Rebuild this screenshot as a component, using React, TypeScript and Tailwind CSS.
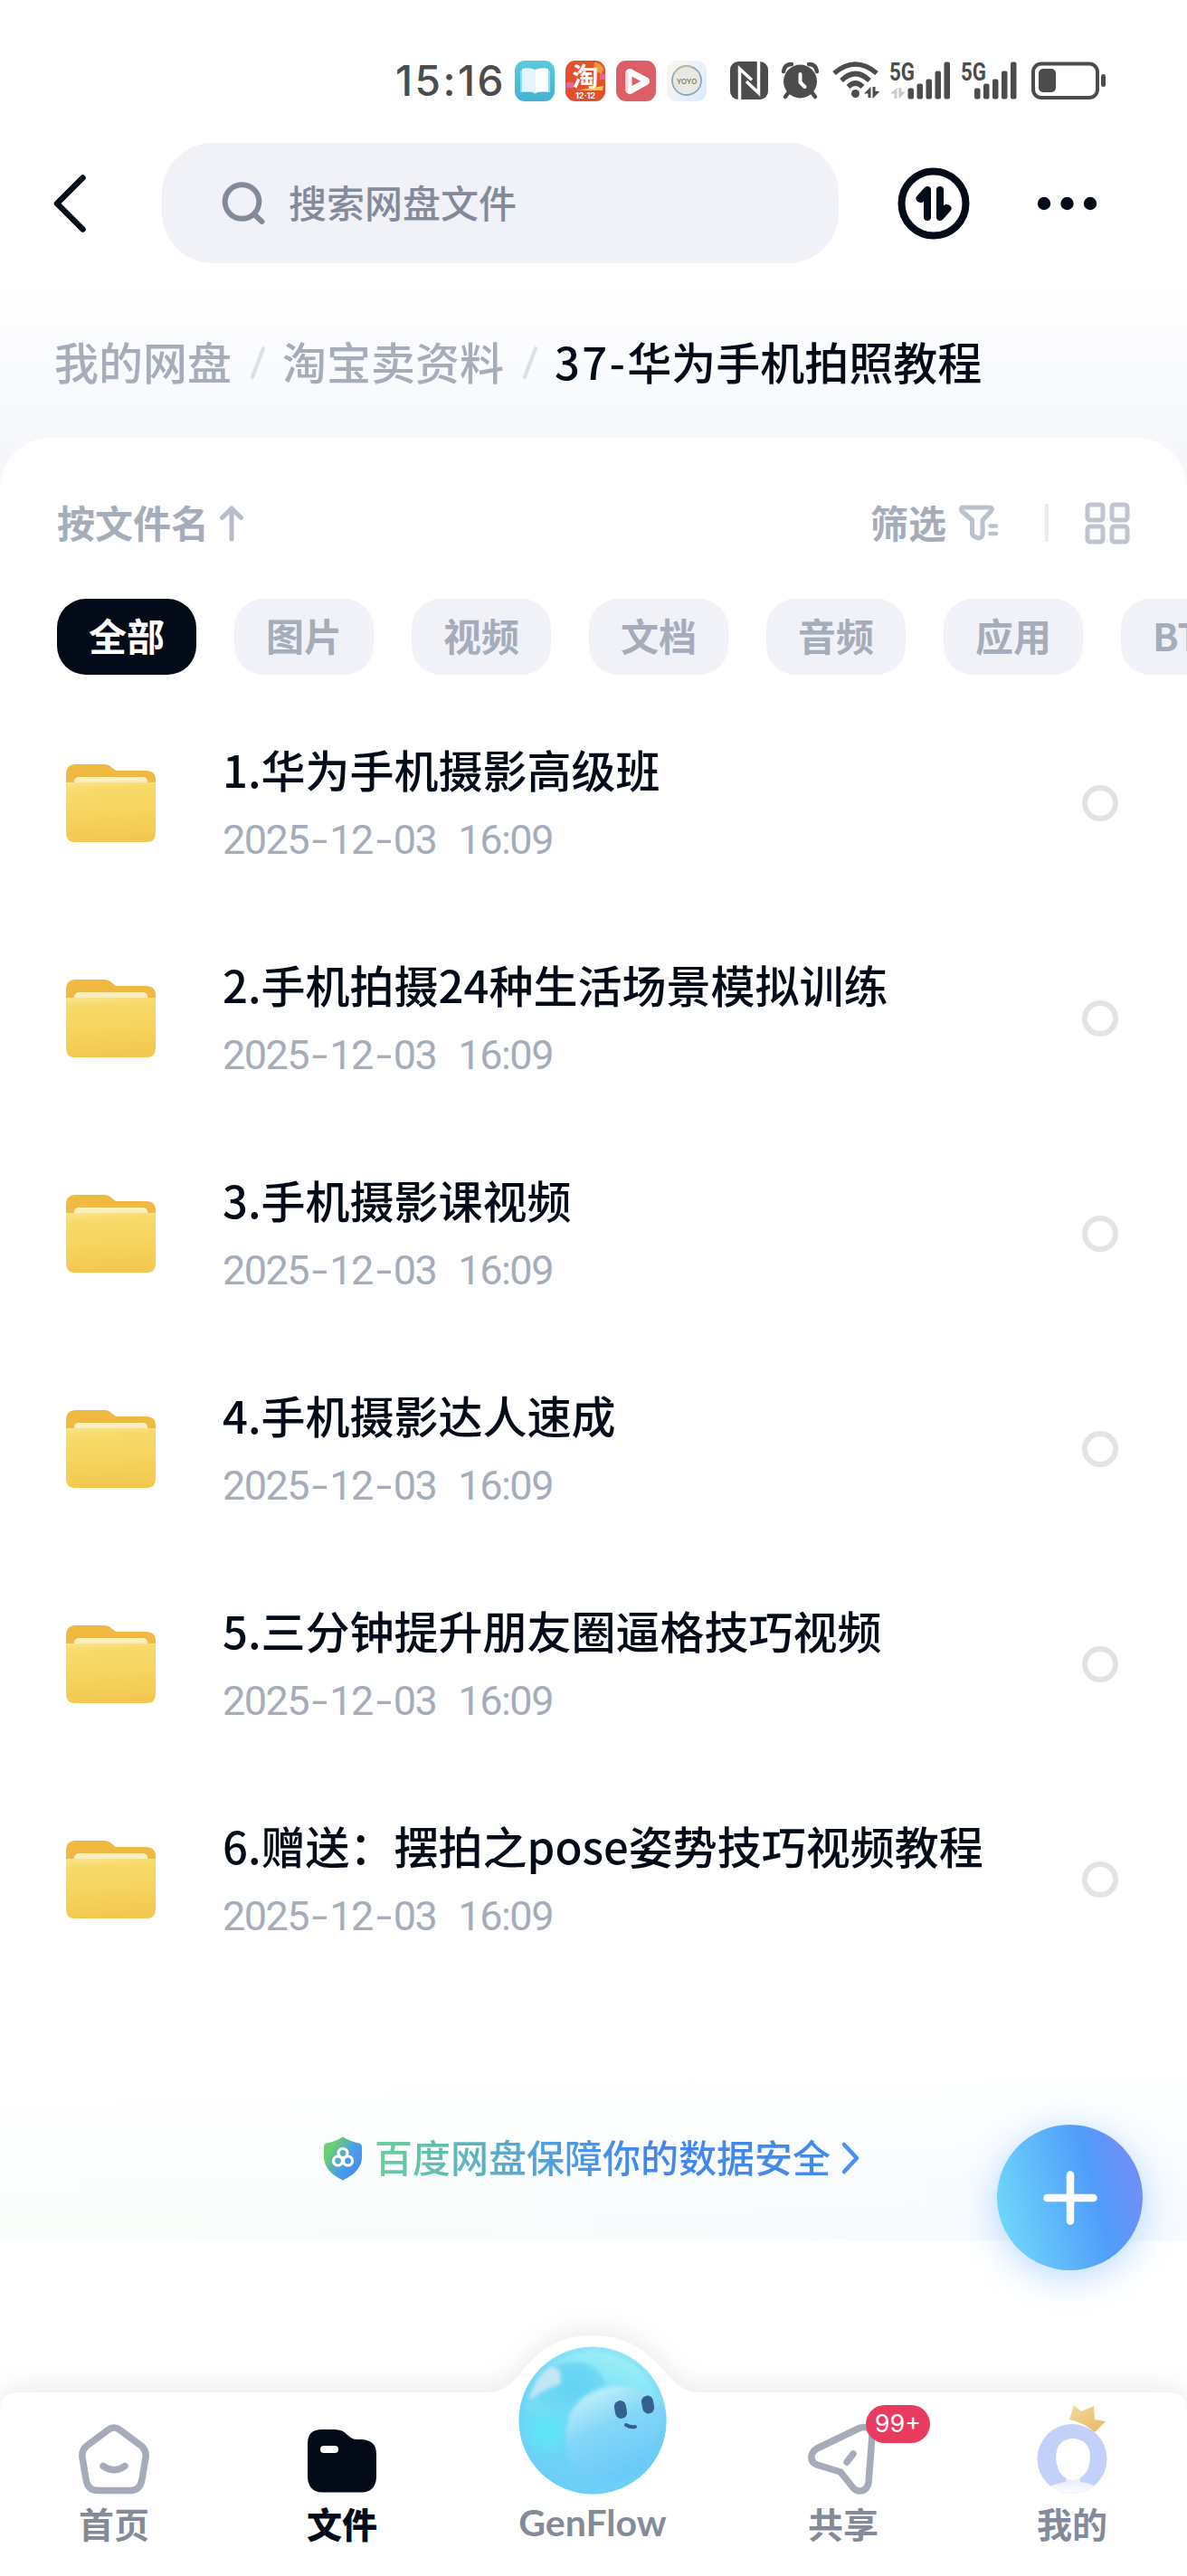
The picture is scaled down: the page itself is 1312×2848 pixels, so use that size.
import { ReactNode } from "react";
import { twMerge } from "tailwind-merge";

type FileItem = { name: string; date: string; time: string };

const files: FileItem[] = [
  { name: "1.华为手机摄影高级班", date: "2025-12-03", time: "16:09" },
  { name: "2.手机拍摄24种生活场景模拟训练", date: "2025-12-03", time: "16:09" },
  { name: "3.手机摄影课视频", date: "2025-12-03", time: "16:09" },
  { name: "4.手机摄影达人速成", date: "2025-12-03", time: "16:09" },
  { name: "5.三分钟提升朋友圈逼格技巧视频", date: "2025-12-03", time: "16:09" },
  {
    name: "6.赠送：摆拍之pose姿势技巧视频教程",
    date: "2025-12-03",
    time: "16:09",
  },
];

const categories = ["全部", "图片", "视频", "文档", "音频", "应用", "BT种子"];

export default function App() {
  return (
    <div className="relative flex h-[2848px] w-[1312px] flex-col overflow-hidden bg-[linear-gradient(to_bottom,#ffffff_310px,#f5f7fb_490px)] font-['Noto_Sans_CJK_SC',sans-serif] text-[#040b18]">
      <StatusBar />
      <Header />
      <Breadcrumb />
      <main className="flex flex-1 flex-col rounded-t-[56px] bg-white">
        <SortBar />
        <Categories />
        <ul className="mt-[23px]">
          {files.map((f) => (
            <FileRow key={f.name} file={f} />
          ))}
        </ul>
        <SafetyBanner />
        <BottomNav />
      </main>
      <AddButton />
    </div>
  );
}

const StatusBar = () => (
  <div className="flex h-[158px] items-start pt-[67px] pl-[437px] text-[#4c4c4c]">
    <div className="flex h-[45px] w-[132px] items-center font-['Inter',sans-serif] text-[46px] leading-[45px] font-medium tracking-[2.500px]">
      15:16
    </div>
    <div className="flex gap-[12px]">
      <BookApp />
      <TaobaoApp />
      <PlayerApp />
      <YoyoApp />
    </div>
    <svg
      className="-mt-[10px] ml-[26px]"
      width="415"
      height="60"
      viewBox="807 57 415 60"
    >
      <NfcGlyph />
      <AlarmGlyph />
      <WifiGlyph />
      <SignalGlyph x={983} barsX={1003.5} />
      <SignalGlyph x={1062} barsX={1077} />
      <path
        d="M984 103.500L991.500 97V109H988.500V103.500ZM993.500 97H996.500V101.500H1001L993.500 109Z"
        fill="#c9c9c9"
      />
      <rect
        x="1142"
        y="70.5"
        width="71"
        height="37.5"
        rx="9"
        fill="none"
        stroke="currentColor"
        strokeWidth="4"
      />
      <rect x="1148" y="76" width="19" height="26" rx="5" fill="currentColor" />
      <rect x="1217" y="82" width="5" height="14" rx="2.5" fill="currentColor" />
    </svg>
  </div>
);

const BookApp = () => (
  <svg width="44" height="45" viewBox="0 0 44 45">
    <defs>
      <linearGradient id="book" x1="0" y1="0" x2="0" y2="1">
        <stop offset="0" stopColor="#5bcbdc" />
        <stop offset="1" stopColor="#45b0d0" />
      </linearGradient>
    </defs>
    <rect width="44" height="45" rx="11" fill="url(#book)" />
    <path d="M6 11h33v24H25l-2.500 2-2.500-2H6z" fill="#8fdcea" />
    <path d="M8 9q8-2 14.500 1v26q-6-3-14.500-1.500z" fill="#e3f4fa" />
    <path d="M37 9q-8-2-14.500 1v26q6-3 14.500-1.500z" fill="#fff" />
  </svg>
);

const TaobaoApp = () => (
  <div className="relative flex h-[45px] w-11 flex-col items-center rounded-[11px] bg-[#e2502c] text-white">
    <svg className="absolute inset-0" width="44" height="45">
      <path d="M32 2q8 1 10 7l-2 6-9-5z" fill="#f39a3c" />
      <rect x="38" y="15" width="6" height="6" fill="#e9669d" />
      <rect x="1" y="24" width="8" height="6" fill="#e9669d" />
      <path d="M12 33l30-5-1 5z" fill="#f0c55a" />
    </svg>
    <span className="relative text-[29px] leading-[32px] font-bold">淘</span>
    <span className="relative font-['Inter',sans-serif] text-[9px] leading-[13px] font-bold">
      12·12
    </span>
  </div>
);

const PlayerApp = () => (
  <svg width="44" height="45" viewBox="0 0 44 45">
    <rect width="44" height="45" rx="11" fill="#dc5f67" />
    <path
      d="M15 13.500L32.500 22.800L15 32.500z"
      fill="#dc5f67"
      stroke="#fff"
      strokeWidth="9"
      strokeLinejoin="round"
    />
    <path d="M17.500 17.500L27 22.800L17.500 28z" fill="#dc5f67" />
    <path d="M12 13v20" stroke="#f6d9db" strokeWidth="3" strokeLinecap="round" />
  </svg>
);

const YoyoApp = () => (
  <div className="relative flex h-[45px] w-11 items-center justify-center rounded-[11px] bg-[linear-gradient(120deg,#faf6ee,#e9f1fc_60%,#dbe9fa)]">
    <svg className="absolute inset-0" width="44" height="45">
      <circle
        cx="22"
        cy="22"
        r="16"
        fill="#e9e9e4"
        stroke="#8fa9b8"
        strokeWidth="1.800"
      />
      <path
        d="M8 15a16 16 0 0 1 20-8"
        fill="none"
        stroke="#cdb98c"
        strokeWidth="1.500"
      />
    </svg>
    <span className="relative font-['Inter',sans-serif] text-[8px] font-semibold text-[#8d7c58]">
      YOYO
    </span>
  </div>
);

const NfcGlyph = () => (
  <>
    <rect x="807" y="68" width="42" height="42" rx="9" fill="currentColor" />
    <path
      d="M817.500 110V76L831 88.500M838.500 68V103L825 90"
      fill="none"
      stroke="#fff"
      strokeWidth="3.500"
    />
  </>
);

const AlarmGlyph = () => (
  <>
    <circle cx="884.500" cy="90" r="18.500" fill="currentColor" />
    <path
      d="M866 79Q867 71 875 71M903 79Q902 71 894 71M871 103L868 107M898 103L901 107"
      fill="none"
      stroke="currentColor"
      strokeWidth="4.500"
      strokeLinecap="round"
    />
    <path
      d="M884.500 82V91L889.500 96"
      fill="none"
      stroke="#fff"
      strokeWidth="4"
      strokeLinecap="round"
      strokeLinejoin="round"
    />
  </>
);

const WifiGlyph = () => (
  <>
    <g fill="none" stroke="currentColor" strokeWidth="5.500">
      <path d="M922 81Q945.500 61 969 81" />
      <path d="M930 89Q945.500 74 961 89" />
      <path d="M937.500 96Q945.500 88 953.500 96" />
    </g>
    <circle cx="945.500" cy="103.500" r="4.500" fill="currentColor" />
    <path
      d="M955 103.500L962.500 96V108H959.500V103.500ZM964.500 96H967.500V101H972.500L964.500 109Z"
      fill="currentColor"
    />
  </>
);

const SignalGlyph = ({ x, barsX }: { x: number; barsX: number }) => (
  <>
    <text
      x={x}
      y="88.500"
      fontFamily="Roboto, sans-serif"
      fontWeight="700"
      fontSize="27"
      textLength="28"
      lengthAdjust="spacingAndGlyphs"
      fill="currentColor"
    >
      5G
    </text>
    {[12, 17, 22, 31, 41].map((h, i) => (
      <rect
        key={h}
        x={barsX + i * 10}
        y={109.5 - h}
        width="6.5"
        height={h}
        rx="2"
        fill="currentColor"
      />
    ))}
  </>
);

const Header = () => (
  <header className="flex h-[133px] items-center pl-[56px]">
    <svg
      width="43"
      height="68"
      viewBox="0 0 43 68"
      fill="none"
      stroke="currentColor"
      strokeWidth="6.500"
      strokeLinecap="round"
      strokeLinejoin="round"
    >
      <path d="M35.500 5.500L7 34L35.500 62.500" />
    </svg>
    <div className="ml-[80px] flex h-full w-[748px] items-center rounded-[56px] bg-[#f1f2f8] pl-[66px] text-[#838b9a]">
      <svg
        width="49"
        height="49"
        viewBox="0 0 49 49"
        fill="none"
        stroke="currentColor"
        strokeWidth="6"
        strokeLinecap="round"
      >
        <circle cx="22.500" cy="23" r="18.800" />
        <path d="M37 38L44.500 45" />
      </svg>
      <span className="-mt-1 ml-[25px] text-[42px] leading-[60px] font-medium">
        搜索网盘文件
      </span>
    </div>
    <svg
      className="ml-[65px]"
      width="80"
      height="80"
      viewBox="0 0 80 80"
      fill="none"
      stroke="currentColor"
      strokeWidth="8"
      strokeLinecap="round"
      strokeLinejoin="round"
    >
      <circle cx="40" cy="40" r="35.500" />
      <path d="M33 55V25L24.500 34.500M33 29L26 35" />
      <path d="M47 25V55L55.500 45.500M47 51L54 45" />
    </svg>
    <svg className="ml-[74px]" width="68" height="16" fill="currentColor">
      <circle cx="8" cy="8" r="7.200" />
      <circle cx="33.500" cy="8" r="7.200" />
      <circle cx="59" cy="8" r="7.200" />
    </svg>
  </header>
);

const Slash = () => (
  <svg
    className="mr-[16px] ml-[18px]"
    width="22"
    height="46"
    viewBox="0 0 22 46"
    stroke="#dcdfe5"
    strokeWidth="4"
    strokeLinecap="round"
  >
    <path d="M5 39L17 7" />
  </svg>
);

const Breadcrumb = () => (
  <nav className="flex h-[193px] items-start pt-[78px] pl-[60px] text-[49px] leading-[60px] font-medium text-[#a5adbb]">
    <span>我的网盘</span>
    <span className="h-[60px] pt-[9px]">
      <Slash />
    </span>
    <span>淘宝卖资料</span>
    <span className="h-[60px] pt-[9px]">
      <Slash />
    </span>
    <span className="text-[#040b18]">
      <span className="tracking-[2.300px]">37-</span>华为手机拍照教程
    </span>
  </nav>
);

const SortBar = () => (
  <div className="mt-[71px] flex h-12 items-center pr-[63px] pl-[63px] text-[42px] leading-[48px] font-bold text-[#a5adbb]">
    <span className="-mt-1">按文件名</span>
    <svg
      className="ml-[11px]"
      width="28"
      height="42"
      viewBox="0 0 28 42"
      fill="none"
      stroke="#b6bcc9"
      strokeWidth="5"
      strokeLinecap="round"
      strokeLinejoin="round"
    >
      <path d="M14 38V4M3.500 14.500L14 4L24.500 14.500" />
    </svg>
    <span className="-mt-1 ml-auto">筛选</span>
    <svg
      className="-mt-[2px] ml-[13px]"
      width="46"
      height="42"
      viewBox="0 0 46 42"
      fill="none"
      stroke="#bbc1cd"
      strokeWidth="5"
      strokeLinecap="round"
      strokeLinejoin="round"
    >
      <path d="M6 4H34Q39 4 36.500 8L27 18V34Q26 38 22 38Q16 36 15.500 33V18L4 8Q2 4 6 4Z" />
      <path d="M35.500 24.500H42M35.500 33H42" strokeWidth="4.500" />
    </svg>
    <div className="-mt-[2px] ml-[50px] h-[42px] w-1 bg-[#ebecee]" />
    <svg
      className="-mt-[2px] ml-[40px]"
      width="50"
      height="47"
      viewBox="0 0 50 47"
      fill="none"
      stroke="#bfc4cf"
      strokeWidth="5"
    >
      <rect x="3" y="3" width="17" height="17" rx="3" />
      <rect x="30" y="3" width="17" height="17" rx="3" />
      <rect x="3" y="27" width="17" height="17" rx="3" />
      <rect x="30" y="27" width="17" height="17" rx="3" />
    </svg>
  </div>
);

const Categories = () => (
  <div className="mt-[59px] flex gap-[42px] overflow-hidden pl-[63px]">
    {categories.map((c, i) => (
      <div
        key={c}
        className={twMerge(
          "flex h-[84px] min-w-[154px] shrink-0 items-center justify-center rounded-[32px] bg-[#f1f2f8] px-[35px] pb-1 text-[42px] leading-[60px] font-bold text-[#a5adbb]",
          i === 0 && "bg-[#040b18] text-white"
        )}
      >
        {c}
      </div>
    ))}
  </div>
);

const FileRow = ({ file }: { file: FileItem }) => (
  <li className="flex h-[238px] items-center pr-[76px] pl-[73px]">
    <FolderIcon />
    <div className="ml-[74px] flex-1">
      <div className="-mt-1 text-[49px] leading-[60px] font-medium">
        {file.name}
      </div>
      <DateText date={file.date} time={file.time} />
    </div>
    <div className="size-[40px] rounded-full border-[6px] border-[#e3e3e3]" />
  </li>
);

const DateText = ({ date, time }: { date: string; time: string }) => (
  <div className="mt-[25px] flex font-['Roboto',sans-serif] text-[45px] leading-[48px] tracking-[-1.500px] text-[#a5adbb]">
    {date.split("-").map((part, i) => (
      <span key={i}>
        {i > 0 && (
          <span className="inline-block w-[23px] origin-center scale-x-[1.400] text-center">
            -
          </span>
        )}
        {part}
      </span>
    ))}
    <span className="ml-[24px]">{time}</span>
  </div>
);

const FolderIcon = () => (
  <svg width="99" height="88" viewBox="0 0 99 88">
    <defs>
      <linearGradient id="folder-front" x1="0" y1="0" x2="0.100" y2="1">
        <stop offset="0" stopColor="#fae58f" />
        <stop offset="0.150" stopColor="#f7da6a" />
        <stop offset="0.550" stopColor="#f6d45e" />
        <stop offset="1" stopColor="#f3c850" />
      </linearGradient>
      <linearGradient id="folder-paper" x1="0" y1="0" x2="0" y2="1">
        <stop offset="0" stopColor="#fdf3cf" />
        <stop offset="1" stopColor="#f9e594" />
      </linearGradient>
    </defs>
    <path
      d="M0 30V12Q0 1 11 1H42Q47 1 50 4L55 8H88Q99 8 99 18V30Z"
      fill="#f0b941"
    />
    <path d="M9 26V20Q9 15 15 15H84Q90 15 90 20V26Z" fill="url(#folder-paper)" />
    <path
      d="M0 21H99V77Q99 87 89 87H10Q0 87 0 77Z"
      fill="url(#folder-front)"
    />
  </svg>
);

const SafetyBanner = () => (
  <div className="mt-[83px] flex h-[197px] items-start bg-[linear-gradient(to_bottom,#ffffff,transparent),linear-gradient(to_right,#f9fefa,#f7fcfc_45%,#f5faff)] pt-[82px] pl-[357px]">
    <svg width="44" height="49" viewBox="0 0 44 49">
      <defs>
        <linearGradient id="shield" x1="0" y1="0.100" x2="1" y2="0.800">
          <stop offset="0.200" stopColor="#6bcf74" />
          <stop offset="0.600" stopColor="#4a9ee8" />
          <stop offset="1" stopColor="#4588f5" />
        </linearGradient>
      </defs>
      <path
        d="M22 0.500Q31 6 40 7.500Q43 8 43 12V24Q42 39 22 48.500Q2 39 1 24V12Q1 8 4 7.500Q13 6 22 0.500Z"
        fill="url(#shield)"
      />
      <g fill="none" stroke="#fff" strokeWidth="3.200">
        <circle cx="22" cy="18.500" r="5" />
        <circle cx="16.500" cy="27" r="5" />
        <circle cx="27.500" cy="27" r="5" />
      </g>
    </svg>
    <span className="-mt-[8px] ml-[13px] bg-[linear-gradient(to_right,#6bcf9b,#4f9ee0_40%,#4285f0_60%,#428ce8)] bg-clip-text text-[42px] leading-[60px] font-medium text-transparent">
      百度网盘保障你的数据安全
    </span>
    <svg
      className="mt-[5px] ml-[11px]"
      width="22"
      height="38"
      viewBox="0 0 22 38"
      fill="none"
      stroke="#4a90ee"
      strokeWidth="4.500"
      strokeLinejoin="round"
      strokeLinecap="round"
    >
      <path d="M4 4L18 19L4 34" />
    </svg>
  </div>
);

const AddButton = () => (
  <button className="absolute top-[2349px] left-[1102px] flex size-[161px] items-center justify-center rounded-full bg-[linear-gradient(75deg,#70d6fa_8%,#4f9dfa_65%,#6f8ff8_88%)] shadow-[0_8px_40px_rgba(80,160,255,0.4)]">
    <svg
      width="60"
      height="60"
      viewBox="0 0 60 60"
      stroke="#fff"
      strokeWidth="8.500"
      strokeLinecap="round"
    >
      <path d="M30 4.500V55.500M4.500 30H55.500" />
    </svg>
  </button>
);

const NavItem = ({
  label,
  active,
  className,
  children,
}: {
  label: string;
  active?: boolean;
  className?: string;
  children: ReactNode;
}) => (
  <div
    className={twMerge(
      "relative flex w-[160px] flex-col items-center justify-end text-[#838b9a]",
      active && "text-[#040b18]",
      className
    )}
  >
    {children}
    <span
      className={twMerge(
        "mt-[3px] text-[39px] leading-[56px] font-bold",
        active && "font-black"
      )}
    >
      {label}
    </span>
  </div>
);

const BottomNav = () => (
  <nav className="relative mt-auto h-[204px]">
    {/* bar with the hump around the centre button */}
    <svg
      className="absolute bottom-0 left-0 drop-shadow-[0_-6px_14px_rgba(0,0,0,0.08)]"
      width="1312"
      height="267"
      viewBox="0 0 1312 267"
    >
      <path
        d="M0 267V84Q0 64 22 64H538C556 64 566 54 576 42C596 16 620 1 655 1C690 1 714 16 736 42C746 54 756 64 774 64H1290Q1312 64 1312 84V267Z"
        fill="#fff"
      />
    </svg>
    <div className="relative flex h-[173px] pl-[46px]">
      <NavItem label="首页">
        <svg
          width="78"
          height="78"
          viewBox="0 0 78 78"
          fill="none"
          stroke="#a5abb9"
          strokeWidth="7.500"
          strokeLinecap="round"
          strokeLinejoin="round"
        >
          <path d="M32.500 6.500Q39 1.500 45.500 6.500L69 24Q75 29 74 37L70 61Q68 73.500 57 73.500H21Q10 73.500 8 61L4 37Q3 29 9 24Z" />
          <path d="M27 46.500Q39 55 51 46.500" />
        </svg>
      </NavItem>
      <NavItem label="文件" active className="ml-[92px]">
        <svg width="76" height="78" viewBox="0 0 76 78">
          <path
            d="M0 21Q0 6 16 6H30Q39 6 44 12Q49 17 54 17H60Q76 18 76 33V59Q75 75 60 75.500H16Q1 75 0 59Z"
            fill="currentColor"
          />
          <rect x="14" y="24" width="20" height="8" rx="4" fill="#fff" />
        </svg>
      </NavItem>
      <NavItem
        label="GenFlow"
        className="ml-[107px] w-[180px] font-['Lato',sans-serif] [&>span]:text-[41px]"
      >
        <Orb />
      </NavItem>
      <NavItem label="共享" className="ml-[107px]">
        <svg
          width="78"
          height="79"
          viewBox="0 0 78 79"
          fill="none"
          stroke="#a5abb9"
          strokeWidth="7.500"
          strokeLinecap="round"
          strokeLinejoin="round"
        >
          <path d="M10 28L58 5Q69 2 71 14L67 66Q65 75 57 75Q52 75 48 69L36 54L10 46Q3 43 4 36Q5 31 10 28Z" />
          <path d="M43 43L50 34" />
        </svg>
        <div className="absolute top-[15px] left-[105px] flex h-[42px] w-[71px] items-center justify-center rounded-full bg-[#e93b60] font-['Inter',sans-serif] text-[27px] text-white">
          99+
        </div>
      </NavItem>
      <NavItem label="我的" className="ml-[93px]">
        <svg width="78" height="100" viewBox="0 0 78 100">
          <defs>
            <linearGradient id="crown" x1="0" y1="0" x2="1" y2="1">
              <stop offset="0" stopColor="#f3d9a0" />
              <stop offset="1" stopColor="#e8b95c" />
            </linearGradient>
            <linearGradient id="body" x1="0" y1="0" x2="0" y2="1">
              <stop offset="0" stopColor="#dfe6f8" />
              <stop offset="1" stopColor="#fdfdff" />
            </linearGradient>
            <clipPath id="avatar">
              <circle cx="39" cy="60.500" r="38.500" />
            </clipPath>
          </defs>
          <g clipPath="url(#avatar)">
            <rect y="20" width="78" height="80" fill="#c3d1f8" />
            <path
              d="M10 100V93Q22 87 32 86V76H48V86Q58 87 70 93V100Z"
              fill="url(#body)"
            />
            <path
              d="M40 38Q59 39 59 60Q57 82 40 84Q23 82 21 60Q21 39 40 38Z"
              fill="#fff"
            />
          </g>
          <path
            d="M41 1L49 8L63 2L64 17L76 19L64 31Q53 21 36 17Z"
            fill="url(#crown)"
          />
        </svg>
      </NavItem>
    </div>
  </nav>
);

const Orb = () => (
  <svg width="164" height="164" viewBox="0 0 164 164" className="shrink-0">
    <defs>
      <linearGradient id="orb" x1="0.700" y1="0" x2="0.400" y2="1">
        <stop offset="0" stopColor="#a5f2f7" />
        <stop offset="0.450" stopColor="#6bdcf7" />
        <stop offset="1" stopColor="#6fcdf8" />
      </linearGradient>
      <linearGradient id="orb-face" x1="0.200" y1="0" x2="0.650" y2="0.900">
        <stop offset="0" stopColor="#c9f3fa" />
        <stop offset="0.450" stopColor="#84d7f8" />
        <stop offset="1" stopColor="#69c9f8" />
      </linearGradient>
      <radialGradient id="orb-dark" cx="0.600" cy="0.400" r="0.600">
        <stop offset="0" stopColor="#62d3f3" />
        <stop offset="1" stopColor="#78dbf5" />
      </radialGradient>
      <filter id="soft">
        <feGaussianBlur stdDeviation="2" />
      </filter>
      <filter id="softer" x="-50%" y="-50%" width="200%" height="200%">
        <feGaussianBlur stdDeviation="8" />
      </filter>
      <clipPath id="orb-clip">
        <circle cx="82" cy="82" r="81.500" />
      </clipPath>
    </defs>
    <g clipPath="url(#orb-clip)">
      <rect width="164" height="164" fill="url(#orb)" />
      <path
        d="M6 70Q16 24 54 18Q88 14 97 44Q70 52 58 80Q34 90 6 70Z"
        fill="url(#orb-dark)"
        filter="url(#soft)"
      />
      <ellipse
        cx="32"
        cy="94"
        rx="22"
        ry="20"
        fill="#5fe4f8"
        filter="url(#softer)"
      />
      <path
        d="M52 100Q54 50 108 44Q150 44 168 80V120Q140 150 92 150Q50 140 52 100Z"
        fill="url(#orb-face)"
        filter="url(#soft)"
      />
      <path
        d="M12 60Q18 30 36 22Q50 24 46 42Q30 46 12 60Z"
        fill="#c3e6f7"
        filter="url(#soft)"
      />
      <circle
        cx="82"
        cy="82"
        r="79"
        fill="none"
        stroke="#6fcdf5"
        strokeWidth="4"
        opacity="0.500"
        filter="url(#soft)"
      />
    </g>
    <g fill="#34618f">
      <rect
        x="106.500"
        y="60"
        width="13"
        height="20"
        rx="6.500"
        transform="rotate(-10 113 70)"
      />
      <rect
        x="136.500"
        y="54.500"
        width="13"
        height="20"
        rx="6.500"
        transform="rotate(-10 143 64)"
      />
    </g>
    <path
      d="M119 87Q124 90 129 89"
      fill="none"
      stroke="#34618f"
      strokeWidth="4"
      strokeLinecap="round"
    />
  </svg>
);
